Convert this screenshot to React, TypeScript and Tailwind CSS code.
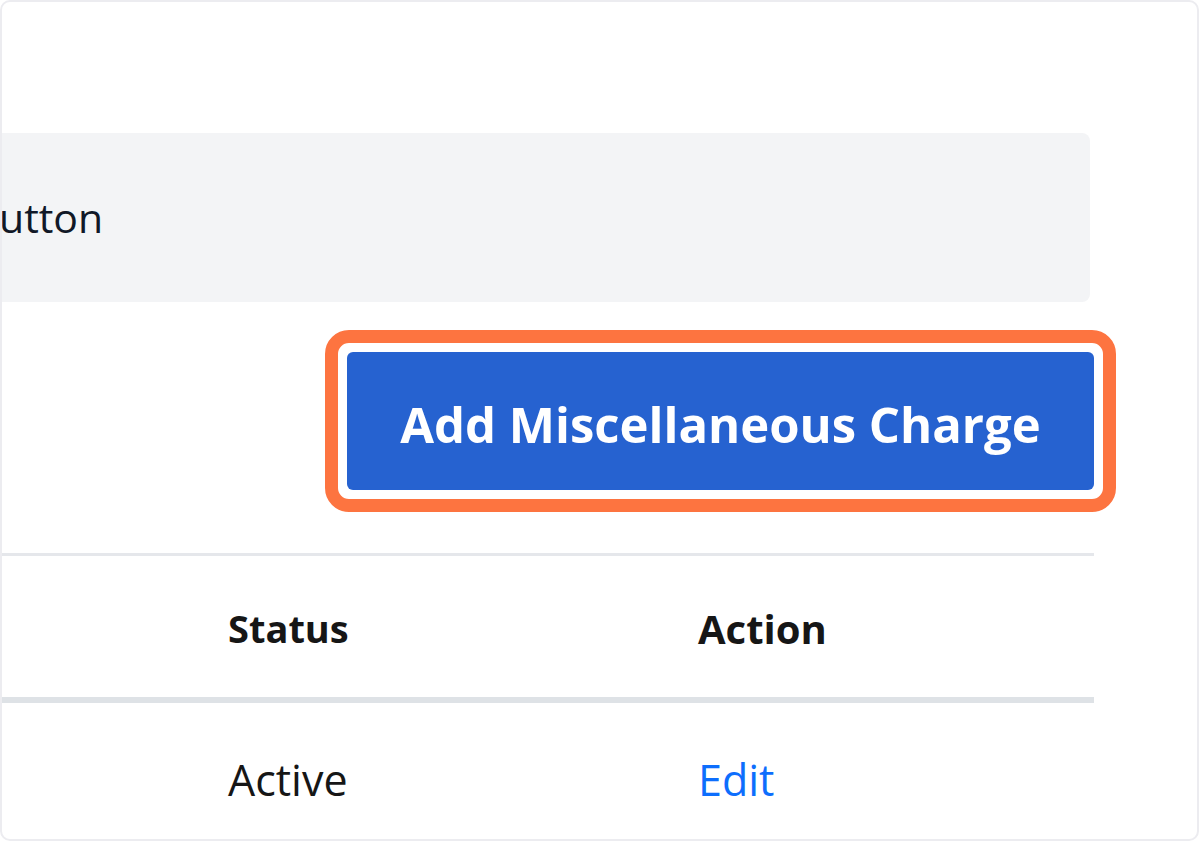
import React from 'react'

const font = { fontFamily: '"Open Sans", "Noto Sans", sans-serif' }

export default function App() {
    return (
        <div className="w-[1200px] h-[842px] bg-white" style={font}>
            <div className="w-[1199px] h-[841px] border-2 border-[#ececf0] rounded-[10px] overflow-hidden">
                {/* Hint box */}
                <div className="mt-[131px] w-[1088px] h-[169px] bg-[#f3f4f6] rounded-r-lg flex items-center">
                    <span className="-ml-[3px] text-[41px] leading-none text-[#111827]">utton</span>
                </div>

                {/* Highlighted button */}
                <div className="w-[1092px] mt-[28px] flex justify-end">
                    <div className="-mr-[22px] border-[13px] border-[#fd7440] rounded-[24px] p-[9px] bg-white">
                        <button className="w-[747px] h-[138px] pt-[6px] bg-[#2662d0] rounded-md text-white font-bold text-[49px] leading-none">
                            Add Miscellaneous Charge
                        </button>
                    </div>
                </div>

                {/* Table */}
                <div className="w-[1092px] mt-[41px] border-t-[3px] border-[#e5e7eb]">
                    <div className="grid grid-cols-[226px_470px_1fr] h-[147px] pt-[4px] items-center border-b-[6px] border-[#dee2e6] font-bold text-[#161616]">
                        <div />
                        <div className="text-[38px]">Status</div>
                        <div className="text-[40px]">Action</div>
                    </div>
                    <div className="grid grid-cols-[226px_470px_1fr] h-[137px] pt-[17px] items-center text-[43px] text-[#161616]">
                        <div />
                        <div>Active</div>
                        <div className="text-[#0d6efd]">Edit</div>
                    </div>
                </div>
            </div>
        </div>
    )
}
